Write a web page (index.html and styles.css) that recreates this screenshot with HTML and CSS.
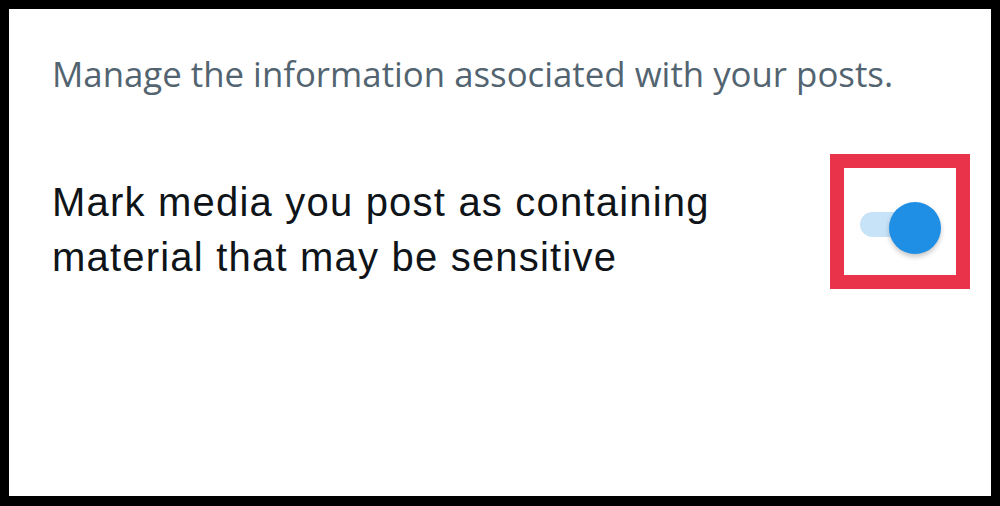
FILE: index.html
```html
<!DOCTYPE html>
<html>
<head>
<meta charset="utf-8">
<link rel="stylesheet" href="styles.css">
</head>
<body>
<div class="frame">
  <p class="desc">Manage the information associated with your posts.</p>
  <div class="row">
    <div class="label">Mark media you post as containing<br>material that may be sensitive</div>
    <div class="highlight">
      <div class="switch">
        <div class="track"></div>
        <div class="knob"></div>
      </div>
    </div>
  </div>
</div>
</body>
</html>
```

FILE: styles.css
```css
html, body {
  margin: 0;
  padding: 0;
  background: #000;
}
body {
  padding: 9px 9px 10px 9px;
  box-sizing: border-box;
  width: 1000px;
  height: 506px;
}
.frame {
  background: #fff;
  height: 487px;
  box-sizing: border-box;
  padding: 41px 0 0 43px;
}
.desc {
  margin: 0;
  font-family: "Open Sans", sans-serif;
  font-size: 34.8px;
  line-height: 48px;
  color: #536471;
}
.row {
  display: flex;
  align-items: flex-start;
  margin-top: 56px;
}
.label {
  font-family: "Liberation Sans", Arial, sans-serif;
  font-size: 40px;
  letter-spacing: 1.2px;
  line-height: 55px;
  color: #0f1419;
  margin-top: 21px;
  flex: 1;
}
.highlight {
  width: 140px;
  height: 135px;
  box-sizing: border-box;
  border: 14px solid #e8334a;
  margin-right: 21px;
  padding: 34px 0 0 16px;
}
.switch {
  position: relative;
  width: 81px;
  height: 52px;
}
.track {
  position: absolute;
  left: 0;
  top: 10px;
  width: 70px;
  height: 25px;
  border-radius: 13px;
  background: #c7e3f8;
}
.knob {
  position: absolute;
  right: 0;
  top: 0;
  width: 52px;
  height: 52px;
  border-radius: 50%;
  background: #1f8fe5;
  box-shadow: 0 3px 5px rgba(0,0,0,0.22);
}
```
